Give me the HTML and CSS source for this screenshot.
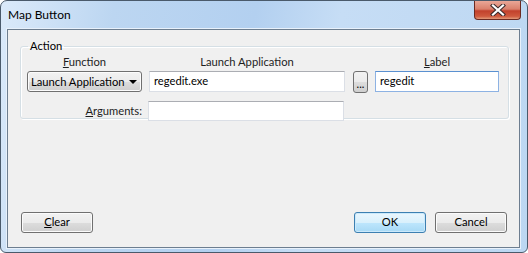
FILE: index.html
```html
<!DOCTYPE html>
<html lang="en">
<head>
  <meta charset="UTF-8">
  <title>Map Button</title>
  <link rel="stylesheet" href="styles.css">
</head>
<body>
  <div class="window">
    <div class="titlebar">
      <div class="title">Map Button</div>
      <div class="close">
        <svg width="16" height="12" viewBox="0 0 16 12">
          <path d="M3 1.5 L13 10.5 M13 1.5 L3 10.5" stroke="#3b2a2a" stroke-width="4.2" stroke-linecap="square"/>
          <path d="M3 1.5 L13 10.5 M13 1.5 L3 10.5" stroke="#fff" stroke-width="2.2" stroke-linecap="square"/>
        </svg>
      </div>
    </div>

    <div class="client">
      <fieldset class="group">
        <legend>Action</legend>
        <div class="grid">
          <div class="head"><u>F</u>unction</div>
          <div class="head">Launch Application</div>
          <div></div>
          <div class="head"><u>L</u>abel</div>

          <div class="combo">
            <span>Launch Application</span>
            <span class="arrow"></span>
          </div>
          <div class="field">regedit.exe</div>
          <div class="dots">...</div>
          <div class="field focus">regedit</div>

          <div class="arglabel"><u>A</u>rguments:</div>
          <div class="field args"></div>
        </div>
      </fieldset>

      <div class="spacer"></div>

      <div class="buttons">
        <div class="btn"><u>C</u>lear</div>
        <div class="right">
          <div class="btn default">OK</div>
          <div class="btn">Cancel</div>
        </div>
      </div>
    </div>
  </div>
</body>
</html>
```

FILE: styles.css
```css
body {
  margin: 0;
  padding: 0;
  font-family: Lato, 'Noto Sans', sans-serif;
  font-size: 11.2px;
  color: #000;
  background-color: #fff;
  white-space: nowrap;
}

.window {
  width: 528px;
  height: 253px;
  box-sizing: border-box;
  border: 1px solid #4a5a6b;
  border-radius: 7px 7px 6px 6px;
  background: linear-gradient(100deg, #dbeafa 0%, #bcd6f1 20%, #b3d0f0 45%, #c6ddf5 60%, #bcd7f2 100%);
  display: flex;
  flex-direction: column;
  overflow: hidden;
}

.titlebar {
  height: 28px;
  display: flex;
  justify-content: space-between;
  align-items: flex-start;
}

.title {
  margin: 6px 0 0 7px;
  font-size: 12px;
  line-height: 16px;
  color: #000;
}

.close {
  width: 45px;
  height: 18px;
  margin-right: 6px;
  border: 1px solid #6b2a22;
  border-top: none;
  border-radius: 0 0 4px 4px;
  background: linear-gradient(#e9a797 0%, #d9806c 45%, #c2412c 55%, #cf5a3e 85%, #e29a7a 100%);
  display: flex;
  justify-content: center;
  align-items: center;
}

.client {
  flex: 1;
  margin: 0 7px 4px 6px;
  border: 1px solid #6d7e90;
  box-shadow: 0 0 0 1px #e8f1fb;
  background-color: #f0f0f0;
  display: flex;
  flex-direction: column;
}

.group {
  margin: 9px 10px 0 12px;
  padding: 1px 6px 4px 6px;
  border: 1px solid #d5dfe5;
  border-radius: 3px;
  box-shadow: inset 1px 1px 0 #fff, 1px 1px 0 #fff;
  min-width: 0;
}

.group legend {
  padding: 0 2px;
  margin-left: 1px;
  line-height: 14px;
}

.grid {
  display: grid;
  grid-template-columns: 115px 196px 16px 124px;
  column-gap: 7px;
  grid-template-rows: 15px 21px 20px;
  row-gap: 2px;
}

.grid > .arglabel,
.grid > .args {
  margin-top: 7px;
}

.head {
  text-align: center;
  line-height: 15px;
  color: #1e1e1e;
}

.combo {
  box-sizing: border-box;
  height: 21px;
  border: 1px solid #707070;
  border-radius: 3px;
  background: linear-gradient(#f2f2f2 0%, #ebebeb 50%, #dddddd 50%, #cfcfcf 100%);
  box-shadow: inset 0 0 0 1px #fcfcfc;
  display: flex;
  align-items: center;
  justify-content: space-between;
  padding: 0 4px 0 3px;
  line-height: 18px;
}

.arrow {
  width: 0;
  height: 0;
  border-left: 4px solid transparent;
  border-right: 4px solid transparent;
  border-top: 4px solid #000;
}

.field {
  box-sizing: border-box;
  height: 21px;
  background-color: #fff;
  border: 1px solid #dbdfe6;
  border-top-color: #abadb3;
  padding: 0 4px;
  line-height: 18px;
}

.field.focus {
  border-color: #8db2e3;
  border-top-color: #5a90d0;
}

.field.args {
  height: 20px;
  margin-left: -1px;
  margin-right: 1px;
}

.dots {
  box-sizing: border-box;
  height: 22px;
  margin-left: 1px;
  border: 1px solid #707070;
  border-radius: 3px;
  background: linear-gradient(#f2f2f2 0%, #ebebeb 50%, #dddddd 50%, #cfcfcf 100%);
  text-align: center;
  line-height: 24px;
  font-size: 11px;
}

.arglabel {
  text-align: right;
  line-height: 20px;
  padding-right: 0;
  color: #1e1e1e;
}

.spacer {
  flex: 1;
}

.buttons {
  display: flex;
  justify-content: space-between;
  padding: 0 12px 14px 13px;
}

.right {
  display: flex;
  gap: 9px;
}

.btn {
  box-sizing: border-box;
  width: 72px;
  height: 21px;
  border: 1px solid #707070;
  border-radius: 3px;
  background: linear-gradient(#f2f2f2 0%, #ebebeb 50%, #dddddd 50%, #cfcfcf 100%);
  box-shadow: inset 0 0 0 1px #fbfbfb;
  text-align: center;
  line-height: 18px;
}

.btn.default {
  border-color: #3c7fb1;
  background: linear-gradient(#eaf6fd 0%, #d9f0fc 50%, #bee6fd 50%, #a7d9f5 100%);
  box-shadow: inset 0 0 0 1px #cbe9fb;
}
```
